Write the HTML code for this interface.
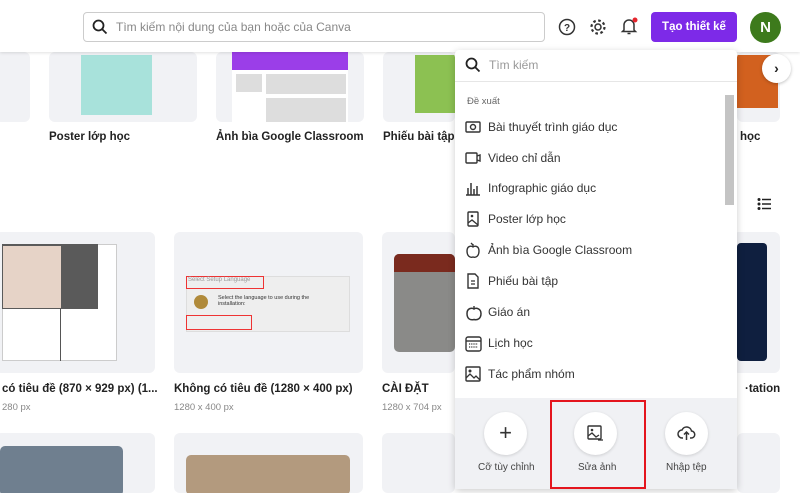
<!DOCTYPE html>
<html><head><meta charset="utf-8"><style>
*{box-sizing:border-box;margin:0;padding:0}
body{width:800px;height:489px;overflow:hidden;background:#fff;font-family:"Liberation Sans","DejaVu Sans",sans-serif;position:relative;color:#0e1318}
.a{position:absolute}
.card{position:absolute;background:#f1f2f5;border-radius:6px;overflow:hidden}
.lbl{position:absolute;font-size:11.5px;font-weight:bold;color:#222;white-space:nowrap}
.sub{position:absolute;font-size:9.5px;color:#888;white-space:nowrap}
.it{position:absolute;left:488px;font-size:12px;color:#333;white-space:nowrap}
.ic{position:absolute;left:465px}
.circ{position:absolute;width:43px;height:43px;border-radius:50%;background:#fff;box-shadow:0 1px 3px rgba(0,0,0,.15)}
.bl{position:absolute;font-size:10px;color:#444;white-space:nowrap}
</style></head><body>
<!-- row1 -->
<div class="card" style="left:-5px;top:52px;width:35px;height:70px"></div>
<div class="card" style="left:49px;top:52px;width:148px;height:70px"><div class="a" style="left:32px;top:3px;width:71px;height:60px;background:#a8e2db"></div></div>
<div class="card" style="left:216px;top:52px;width:148px;height:70px"><div class="a" style="left:16px;top:0;width:116px;height:70px;background:#fff"></div><div class="a" style="left:16px;top:0;width:116px;height:18px;background:#9b3ee8"></div><div class="a" style="left:20px;top:22px;width:26px;height:18px;background:#ddd"></div><div class="a" style="left:50px;top:22px;width:80px;height:20px;background:#ddd"></div><div class="a" style="left:50px;top:46px;width:80px;height:24px;background:#ddd"></div></div>
<div class="card" style="left:383px;top:52px;width:72px;height:70px"><div class="a" style="left:32px;top:3px;width:40px;height:58px;background:#8cc152"></div></div>
<div class="card" style="left:737px;top:52px;width:43px;height:70px"><div class="a" style="left:0;top:3px;width:41px;height:53px;background:#d2611f"></div></div>
<div class="lbl" style="left:49px;top:131px">Poster lớp học</div>
<div class="lbl" style="left:216px;top:131px">Ảnh bìa Google Classroom</div>
<div class="lbl" style="left:383px;top:131px">Phiếu bài tập</div>
<div class="lbl" style="left:740px;top:131px">học</div>
<!-- list icon -->
<svg class="a" style="left:757px;top:197px" width="14" height="14" viewBox="0 0 14 14"><circle cx="2" cy="2.5" r="1.5" fill="#222"/><circle cx="2" cy="7" r="1.5" fill="#222"/><circle cx="2" cy="11.5" r="1.5" fill="#222"/><path d="M5 2.5h9M5 7h9M5 11.5h9" stroke="#222" stroke-width="1.6"/></svg>
<!-- row2 -->
<div class="card" style="left:-5px;top:232px;width:160px;height:141px"><div class="a" style="left:7px;top:12px;width:115px;height:117px;background:#fff;border:1px solid #ccc"></div><div class="a" style="left:7px;top:12px;width:96px;height:65px;background:#5a5a5a"></div><div class="a" style="left:8px;top:14px;width:58px;height:62px;background:#e6d3c7"></div><div class="a" style="left:65px;top:77px;width:1px;height:52px;background:#555"></div></div>
<div class="card" style="left:174px;top:232px;width:189px;height:141px"><div class="a" style="left:12px;top:44px;width:164px;height:56px;background:#eee;border:1px solid #ddd"></div><div class="a" style="left:12px;top:44px;width:78px;height:13px;border:1px solid #e33"></div><div class="a" style="left:12px;top:83px;width:66px;height:15px;border:1px solid #e33"></div><div class="a" style="left:14px;top:45px;font-size:6px;color:#999">Select Setup Language</div><div class="a" style="left:44px;top:63px;font-size:5.5px;color:#333">Select the language to use during the<br>installation:</div><div class="a" style="left:20px;top:63px;width:14px;height:14px;border-radius:50%;background:#b08a3a"></div></div>
<div class="card" style="left:382px;top:232px;width:73px;height:141px"><div class="a" style="left:12px;top:22px;width:61px;height:98px;background:#8a8a88;border-radius:5px"></div><div class="a" style="left:12px;top:22px;width:61px;height:18px;background:#7a2a1e;border-radius:5px 5px 0 0"></div></div>
<div class="card" style="left:733px;top:232px;width:47px;height:141px"><div class="a" style="left:4px;top:11px;width:30px;height:118px;background:#0f1f3f;border-radius:4px"></div></div>
<div class="lbl" style="left:2px;top:383px">có tiêu đề (870 × 929 px) (1...</div>
<div class="sub" style="left:2px;top:402px">280 px</div>
<div class="lbl" style="left:174px;top:383px">Không có tiêu đề (1280 × 400 px)</div>
<div class="sub" style="left:174px;top:402px">1280 x 400 px</div>
<div class="lbl" style="left:382px;top:383px">CÀI ĐẶT</div>
<div class="sub" style="left:382px;top:402px">1280 x 704 px</div>
<div class="lbl" style="left:745px;top:383px">·tation</div>
<!-- row3 -->
<div class="card" style="left:-5px;top:433px;width:160px;height:60px"><div class="a" style="left:5px;top:13px;width:123px;height:50px;background:#6f7f8f;border-radius:5px"></div></div>
<div class="card" style="left:174px;top:433px;width:189px;height:60px"><div class="a" style="left:12px;top:22px;width:164px;height:40px;background:#b39a7e;border-radius:5px"></div></div>
<div class="card" style="left:382px;top:433px;width:73px;height:60px"></div>
<div class="card" style="left:737px;top:433px;width:43px;height:60px"></div>
<!-- header -->
<div class="a" style="left:0;top:0;width:800px;height:52px;background:#fff;box-shadow:0 1px 3px rgba(0,0,0,.12)"></div>
<div class="a" style="left:83px;top:12px;width:462px;height:30px;border:1px solid #ccc;border-radius:4px;background:#fff"></div>
<svg class="a" style="left:92px;top:19px" width="16" height="16" viewBox="0 0 16 16"><circle cx="6.5" cy="6.5" r="5" fill="none" stroke="#222" stroke-width="1.8"/><path d="M10 10l4.5 4.5" stroke="#222" stroke-width="1.8"/></svg>
<div class="a" style="left:116px;top:20px;font-size:12px;color:#888">Tìm kiếm nội dung của bạn hoặc của Canva</div>
<svg class="a" style="left:558px;top:18px" width="18" height="18" viewBox="0 0 18 18"><circle cx="9" cy="9" r="7.5" fill="none" stroke="#333" stroke-width="1.5"/><text x="9" y="13" font-size="10" font-weight="bold" text-anchor="middle" fill="#333" font-family="Liberation Sans">?</text></svg>
<svg class="a" style="left:589px;top:18px" width="18" height="18" viewBox="0 0 18 18"><circle cx="9" cy="9" r="3" fill="none" stroke="#333" stroke-width="1.5"/><circle cx="9" cy="9" r="6.5" fill="none" stroke="#333" stroke-width="2.2" stroke-dasharray="2.6 2.5"/></svg>
<svg class="a" style="left:620px;top:16px" width="18" height="20" viewBox="0 0 18 20"><path d="M4 14V9a5 5 0 0110 0v5l1.5 1.5h-13z" fill="none" stroke="#333" stroke-width="1.5"/><path d="M7.5 17.5h3" stroke="#333" stroke-width="1.5"/><circle cx="15" cy="4" r="2.5" fill="#e5262d"/></svg>
<div class="a" style="left:651px;top:12px;width:86px;height:30px;background:#7d2ae8;border-radius:4px;color:#fff;font-size:11.5px;font-weight:bold;text-align:center;line-height:30px">Tạo thiết kế</div>
<div class="a" style="left:750px;top:12px;width:31px;height:31px;border-radius:50%;background:#3d7a1c;color:#fff;font-size:15px;font-weight:bold;text-align:center;line-height:31px">N</div>
<div class="a" style="left:762px;top:54px;width:29px;height:29px;border-radius:50%;background:#fff;box-shadow:0 1px 3px rgba(0,0,0,.25);text-align:center;line-height:28px;font-size:14px;font-weight:bold;color:#222">›</div>
<!-- dropdown -->
<div class="a" style="left:455px;top:50px;width:282px;height:439px;background:#fff;border-radius:4px;box-shadow:0 2px 8px rgba(0,0,0,.2)"></div>
<div class="a" style="left:455px;top:81px;width:282px;height:1px;background:#e6e6e6"></div>
<svg class="a" style="left:465px;top:57px" width="16" height="16" viewBox="0 0 16 16"><circle cx="6.5" cy="6.5" r="5" fill="none" stroke="#222" stroke-width="1.8"/><path d="M10 10l4.5 4.5" stroke="#222" stroke-width="1.8"/></svg>
<div class="a" style="left:489px;top:58px;font-size:12px;color:#999">Tìm kiếm</div>
<div class="a" style="left:725px;top:95px;width:9px;height:110px;background:#c4c4c4"></div>
<div class="a" style="left:467px;top:96px;font-size:9.5px;color:#666">Đề xuất</div>
<div class="it" style="top:120px">Bài thuyết trình giáo dục</div>
<div class="it" style="top:151px">Video chỉ dẫn</div>
<div class="it" style="top:181px">Infographic giáo dục</div>
<div class="it" style="top:212px">Poster lớp học</div>
<div class="it" style="top:243px">Ảnh bìa Google Classroom</div>
<div class="it" style="top:274px">Phiếu bài tập</div>
<div class="it" style="top:305px">Giáo án</div>
<div class="it" style="top:336px">Lịch học</div>
<div class="it" style="top:367px">Tác phẩm nhóm</div>
<svg class="ic" style="top:119px" width="16" height="16" viewBox="0 0 16 16"><rect x="1" y="3" width="14" height="10" rx="1" fill="none" stroke="#333" stroke-width="1.4"/><circle cx="8" cy="8" r="2.5" fill="none" stroke="#333" stroke-width="1.4"/></svg>
<svg class="ic" style="top:150px" width="16" height="16" viewBox="0 0 16 16"><rect x="1" y="3" width="11" height="10" rx="1" fill="none" stroke="#333" stroke-width="1.4"/><path d="M12 6l3-1v6l-3-1" fill="none" stroke="#333" stroke-width="1.4"/></svg>
<svg class="ic" style="top:180px" width="16" height="16" viewBox="0 0 16 16"><path d="M1 15h14M3 15V8M6 15V3M9 15V9M12 15V6" stroke="#333" stroke-width="1.5"/></svg>
<svg class="ic" style="top:211px" width="16" height="16" viewBox="0 0 16 16"><rect x="3" y="1" width="10" height="14" rx="1" fill="none" stroke="#333" stroke-width="1.4"/><circle cx="7" cy="5" r="1.3" fill="#333"/><path d="M3 12l4-3 6 5" fill="none" stroke="#333" stroke-width="1.3"/></svg>
<svg class="ic" style="top:242px" width="16" height="17" viewBox="0 0 16 17"><path d="M8 5c-2-1.5-6-1-6 4s3 7 6 6c3 1 6-1 6-6s-4-5.5-6-4z" fill="none" stroke="#333" stroke-width="1.4"/><path d="M8 5V2M6 1l2 2" stroke="#333" stroke-width="1.3"/></svg>
<svg class="ic" style="top:273px" width="16" height="16" viewBox="0 0 16 16"><path d="M3 1h7l3 3v11H3z" fill="none" stroke="#333" stroke-width="1.4"/><path d="M6 8h4M6 11h4" stroke="#333" stroke-width="1.3"/></svg>
<svg class="ic" style="top:304px" width="18" height="17" viewBox="0 0 18 17"><path d="M9 5c-2-1.5-7-1-7 4.5s3.5 7 7 6c3.5 1 7-1 7-6S11 3.5 9 5z" fill="none" stroke="#333" stroke-width="1.5"/><path d="M9 5V2" stroke="#333" stroke-width="1.4"/></svg>
<svg class="ic" style="top:335px" width="17" height="17" viewBox="0 0 17 17"><rect x="1" y="2" width="15" height="14" rx="2" fill="none" stroke="#333" stroke-width="1.4"/><path d="M1 6h15" stroke="#333" stroke-width="1.4"/><path d="M4 9h9M4 12h9" stroke="#333" stroke-width="1.2" stroke-dasharray="1.2 1"/></svg>
<svg class="ic" style="top:366px" width="16" height="16" viewBox="0 0 16 16"><rect x="1" y="1" width="14" height="14" rx="1" fill="none" stroke="#333" stroke-width="1.4"/><circle cx="5" cy="5" r="1.5" fill="#333"/><path d="M1 12l4-4 4 4 2-2 4 4" fill="none" stroke="#333" stroke-width="1.3"/></svg>
<div class="a" style="left:455px;top:398px;width:282px;height:91px;background:#f0f1f4"></div>
<div class="circ" style="left:484px;top:412px"></div>
<div class="a" style="left:484px;top:412px;width:43px;height:43px;text-align:center;line-height:42px;font-size:22px;color:#333">+</div>
<div class="circ" style="left:574px;top:412px"></div>
<svg class="a" style="left:587px;top:425px" width="17" height="17" viewBox="0 0 17 17"><rect x="1" y="1" width="13" height="13" rx="1" fill="none" stroke="#333" stroke-width="1.4"/><circle cx="5" cy="5" r="1.3" fill="#333"/><path d="M1 11l4-3 4 4 3-2" fill="none" stroke="#333" stroke-width="1.3"/><path d="M11 15h5" stroke="#333" stroke-width="1.3"/></svg>
<div class="circ" style="left:665px;top:412px"></div>
<svg class="a" style="left:677px;top:424px" width="19" height="18" viewBox="0 0 19 18"><path d="M6 14H5a4 4 0 010-8 5 5 0 019.5 1A3.5 3.5 0 0114 14h-1" fill="none" stroke="#333" stroke-width="1.5"/><path d="M9.5 16V8M7 10.5l2.5-2.5 2.5 2.5" fill="none" stroke="#333" stroke-width="1.5"/></svg>
<div class="bl" style="left:478px;top:462px">Cỡ tùy chỉnh</div>
<div class="bl" style="left:578px;top:462px">Sửa ảnh</div>
<div class="bl" style="left:666px;top:462px">Nhập tệp</div>
<div class="a" style="left:550px;top:400px;width:96px;height:89px;border:2px solid #e4151d"></div>
</body></html>
